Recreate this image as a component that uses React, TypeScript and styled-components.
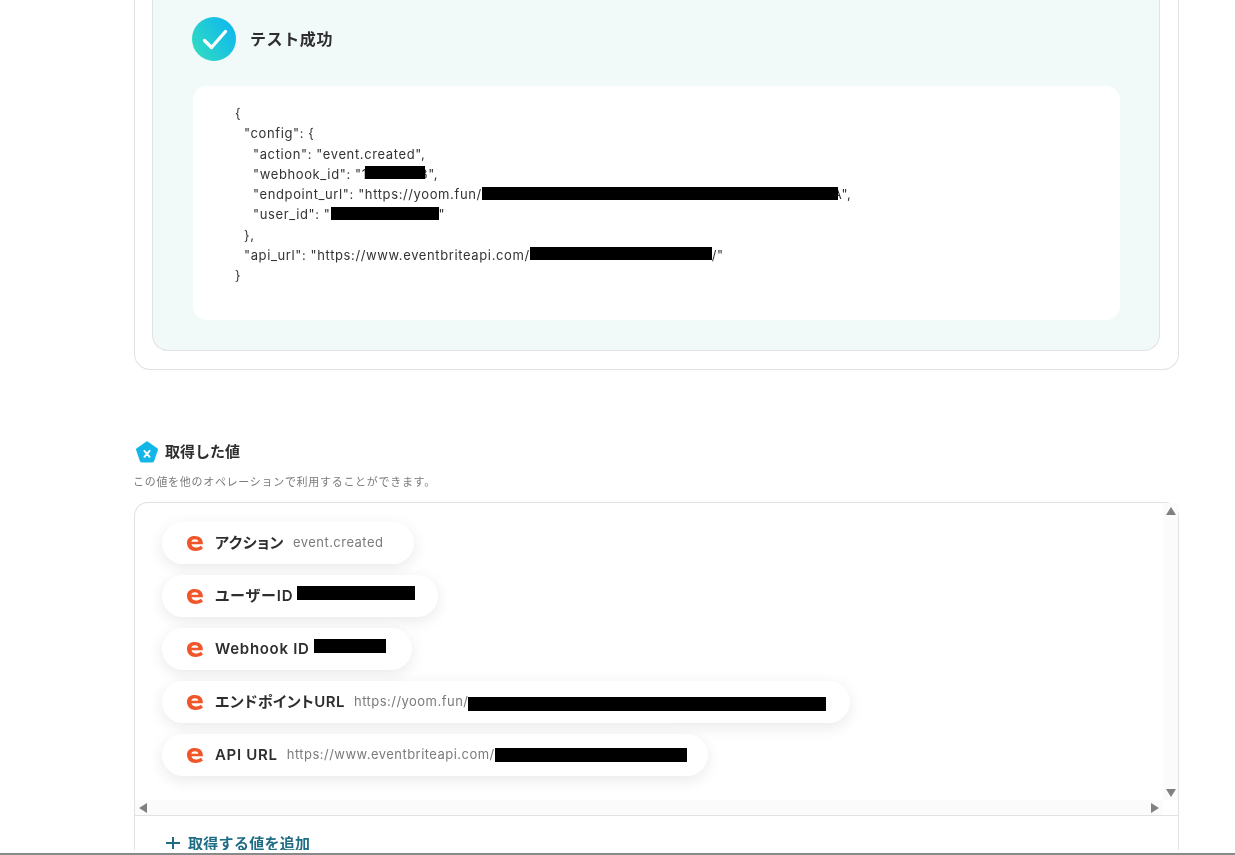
import React from "react";
import styled, { createGlobalStyle } from "styled-components";

const Global = createGlobalStyle`
  html, body { margin: 0; padding: 0; background: #fff; overflow: hidden; }
  body { font-family: Inter, "Noto Sans CJK JP", "Noto Sans", sans-serif; color: #2e2e2e; }
`;
const Page = styled.div`
  width: 1235px; height: 855px; overflow: hidden; display: flex; flex-direction: column;
  box-sizing: border-box; padding-left: 134px; border-bottom: 2px solid #8a8a8a;
`;
const Column = styled.div`
  width: 1045px; height: 850px; overflow: hidden; display: flex; flex-direction: column; flex: none;
  will-change: transform;
`;
const OuterCard = styled.section`
  box-sizing: border-box; height: 370px; flex: none; border: 1px solid #e2e2e6; border-top: 0;
  border-radius: 0 0 16px 16px; padding: 0 18px 18px 17px; display: flex;
`;
const TestPanel = styled.div`
  flex: 1; box-sizing: border-box; background: #f2faf9; border: 1px solid #e2e2e6; border-top: 0;
  border-radius: 0 0 16px 16px; padding: 17px 39px 30px 40px; display: flex; flex-direction: column;
`;
const ResultHead = styled.div`display: flex; align-items: center; gap: 14px; height: 44px; margin: 0 0 25px -1px;`;
const ResultTitle = styled.h3`margin: 0 0 3px; font-size: 16px; font-weight: 600; letter-spacing: .6px; color: #2e2e2e;`;
const CodeBox = styled.div`
  flex: 1; background: #fff; border-radius: 14px; padding: 17px 0 0 42px;
`;
const CodeLine = styled.div<{ $indent: number }>`
  font-size: 13px; letter-spacing: .62px; line-height: 20.25px; height: 20.25px; white-space: pre; color: #333;
  padding-left: ${p => p.$indent * 9}px; display: flex; align-items: center;
`;
const Redact = styled.span<{ $w: number; $h?: number }>`
  display: inline-block; flex: none; background: #000; width: ${p => p.$w}px; height: ${p => p.$h ?? 13}px;
`;
const CodeRedact = styled(Redact)<{ $left?: number; $right?: number }>`
  position: relative; z-index: 1;
  margin: 0 ${p => p.$right ?? 0}px 2px ${p => p.$left ?? 0}px;
`;
const ValuesHead = styled.div`display: flex; align-items: center; gap: 6px; margin-top: 70px; height: 24px; flex: none;`;
const ValuesTitle = styled.h3`margin: 0 0 4px; font-size: 15px; font-weight: 600; color: #2e2e2e;`;
const ValuesNote = styled.p`margin: 10px 0 0 -1px; font-size: 11px; letter-spacing: .7px; line-height: 16px; color: #7b7b7b;`;
const ValuesCard = styled.div`
  margin-top: 12px; box-sizing: border-box; border: 1px solid #e2e2e6; border-bottom: 0; border-radius: 14px 14px 0 0;
  display: flex; flex-direction: column; flex: 1;
`;
const Scroller = styled.div`
  height: 312px; flex: none; display: grid; grid-template-columns: 1fr 15px; grid-template-rows: 297px 15px;
  border-bottom: 1px solid #e2e2e6;
`;
const PillList = styled.div`
  display: flex; flex-direction: column; align-items: flex-start; gap: 11px; padding: 19px 0 0 27px; overflow: hidden;
`;
const Pill = styled.div<{ $end: number }>`
  height: 42px; box-sizing: border-box; padding: 0 ${p => p.$end}px 0 25px; border-radius: 21px; background: #fff;
  display: flex; align-items: center; box-shadow: 0 4px 16px rgba(0,0,0,.09); white-space: nowrap;
`;
const PillLabel = styled.span<{ $track: number; $lift: number }>`
  font-size: 15px; font-weight: 600; color: #2e2e2e; margin-left: 12px; letter-spacing: ${p => p.$track}px;
  font-feature-settings: "palt"; margin-top: ${p => -p.$lift}px;
`;
const PillValue = styled.span`font-size: 13px; color: #7b7b7b; margin: -2px 0 0 9px; letter-spacing: .47px;`;
const PillRedact = styled(Redact)`margin: 0 0 6px 4px;`;
const ValueRedact = styled(Redact)<{ $shift: number }>`margin-top: ${p => p.$shift}px;`;
const VBar = styled.div`background: #fbfbfb; display: flex; flex-direction: column; justify-content: space-between; align-items: center; padding: 4px 0 3px;`;
const HBar = styled.div`background: #fbfbfb; display: flex; justify-content: space-between; align-items: center; padding: 0 4px;`;
const Corner = styled.div`background: #fff;`;
const AddRow = styled.div`
  display: flex; align-items: center; gap: 7px; padding: 16px 0 0 30px; font-size: 15px; letter-spacing: .3px; font-weight: 600; color: #1f6d84;
`;

const Arrow = ({ d }: { d: "u" | "d" | "l" | "r" }) => {
  const pts = { u: "0,8 5,0 10,8", d: "0,0 10,0 5,8", l: "8,0 8,10 0,5", r: "0,0 0,10 8,5" }[d];
  const vertical = d === "u" || d === "d";
  return <svg width={vertical ? 10 : 8} height={vertical ? 8 : 10} viewBox={vertical ? "0 0 10 8" : "0 0 8 10"}><polygon points={pts} fill="#808080" /></svg>;
};
const CheckBadge = () => (
  <svg width="44" height="44" viewBox="0 0 44 44">
    <defs><linearGradient id="cg" x1="0" y1="0.8" x2="1" y2="0.2"><stop offset="0" stopColor="#30dcc0" /><stop offset="1" stopColor="#0eb6f0" /></linearGradient></defs>
    <circle cx="22" cy="22" r="22" fill="url(#cg)" />
    <path d="M12.5 23.5l7 7 14-16" fill="none" stroke="#fff" strokeWidth="3.4" strokeLinecap="round" strokeLinejoin="round" />
  </svg>
);
const PentagonX = () => (
  <svg width="25" height="24" viewBox="0 0 25 24">
    <path d="M13 2.2 L23 9.4 L19.3 20.4 Q19 21.6 17.5 21.6 L8.5 21.6 Q7 21.6 6.7 20.4 L3 9.4 Z" fill="#12b7e8" stroke="#12b7e8" strokeWidth="2" strokeLinejoin="round" />
    <path d="M10.4 10.8l5.2 6M15.6 10.8l-5.2 6" stroke="#fff" strokeWidth="1.8" strokeLinecap="round" />
  </svg>
);
const BriteE = () => (
  <svg width="16" height="15" viewBox="2.6 2 11.5 12.6" preserveAspectRatio="none">
    <path d="M2.6 7.1 C2.9 3.6 5.4 2 8.2 2 C11.6 2 14 4.3 14 8.4 L14 9 L5.8 9 C6.3 10.9 7.5 11.6 9 11.6 C10.4 11.6 11.6 11.1 12.6 10.1 L14.1 12.6 C12.8 13.7 10.9 14.6 8.6 14.6 C4.9 14.6 2.4 11.7 2.6 7.1 Z M5.7 6.8 L10.8 6.8 C10.5 5.4 9.7 4.8 8.3 4.8 C7 4.8 6.1 5.5 5.7 6.8 Z" fill="#f0562a" fillRule="evenodd" />
  </svg>
);
const PlusIcon = () => (
  <svg width="16" height="16" viewBox="0 0 16 16"><path d="M8 2v12M1 8h14" stroke="#1f6d84" strokeWidth="2" /></svg>
);

export default function App() {
  return (
    <Page>
      <Global />
      <Column>
        <OuterCard>
          <TestPanel>
            <ResultHead><CheckBadge /><ResultTitle>テスト成功</ResultTitle></ResultHead>
            <CodeBox>
              <CodeLine $indent={0}>{"{"}</CodeLine>
              <CodeLine $indent={1}>{'"config": {'}</CodeLine>
              <CodeLine $indent={2}>{'"action": "event.created",'}</CodeLine>
              <CodeLine $indent={2}>{'"webhook_id": "1'}<CodeRedact $w={60} $left={-3} $right={-5} />{'3",'}</CodeLine>
              <CodeLine $indent={2}>{'"endpoint_url": "https://yoom.fun/'}<CodeRedact $w={356} $right={-5} />{'A",'}</CodeLine>
              <CodeLine $indent={2}>{'"user_id": "'}<CodeRedact $w={108} />{'"'}</CodeLine>
              <CodeLine $indent={1}>{"},"}</CodeLine>
              <CodeLine $indent={1}>{'"api_url": "https://www.eventbriteapi.com/'}<CodeRedact $w={182} />{'/"'}</CodeLine>
              <CodeLine $indent={0}>{"}"}</CodeLine>
            </CodeBox>
          </TestPanel>
        </OuterCard>
        <ValuesHead><PentagonX /><ValuesTitle>取得した値</ValuesTitle></ValuesHead>
        <ValuesNote>この値を他のオペレーションで利用することができます。</ValuesNote>
        <ValuesCard>
          <Scroller>
            <PillList>
              <Pill $end={31}><BriteE /><PillLabel $track={.5} $lift={3}>アクション</PillLabel><PillValue>event.created</PillValue></Pill>
              <Pill $end={23}><BriteE /><PillLabel $track={.9} $lift={3}>ユーザーID</PillLabel><PillRedact $w={118} $h={14} /></Pill>
              <Pill $end={26}><BriteE /><PillLabel $track={.7} $lift={1}>Webhook ID</PillLabel><PillRedact $w={72} $h={14} /></Pill>
              <Pill $end={24}><BriteE /><PillLabel $track={.5} $lift={3}>エンドポイントURL</PillLabel><PillValue>https://yoom.fun/</PillValue><ValueRedact $shift={4} $w={358} $h={14} /></Pill>
              <Pill $end={21}><BriteE /><PillLabel $track={.7} $lift={1}>API URL</PillLabel><PillValue>https://www.eventbriteapi.com/</PillValue><ValueRedact $shift={-1} $w={192} $h={14} /></Pill>
            </PillList>
            <VBar><Arrow d="u" /><Arrow d="d" /></VBar>
            <HBar><Arrow d="l" /><Arrow d="r" /></HBar>
            <Corner />
          </Scroller>
          <AddRow><PlusIcon />取得する値を追加</AddRow>
        </ValuesCard>
      </Column>
    </Page>
  );
}
